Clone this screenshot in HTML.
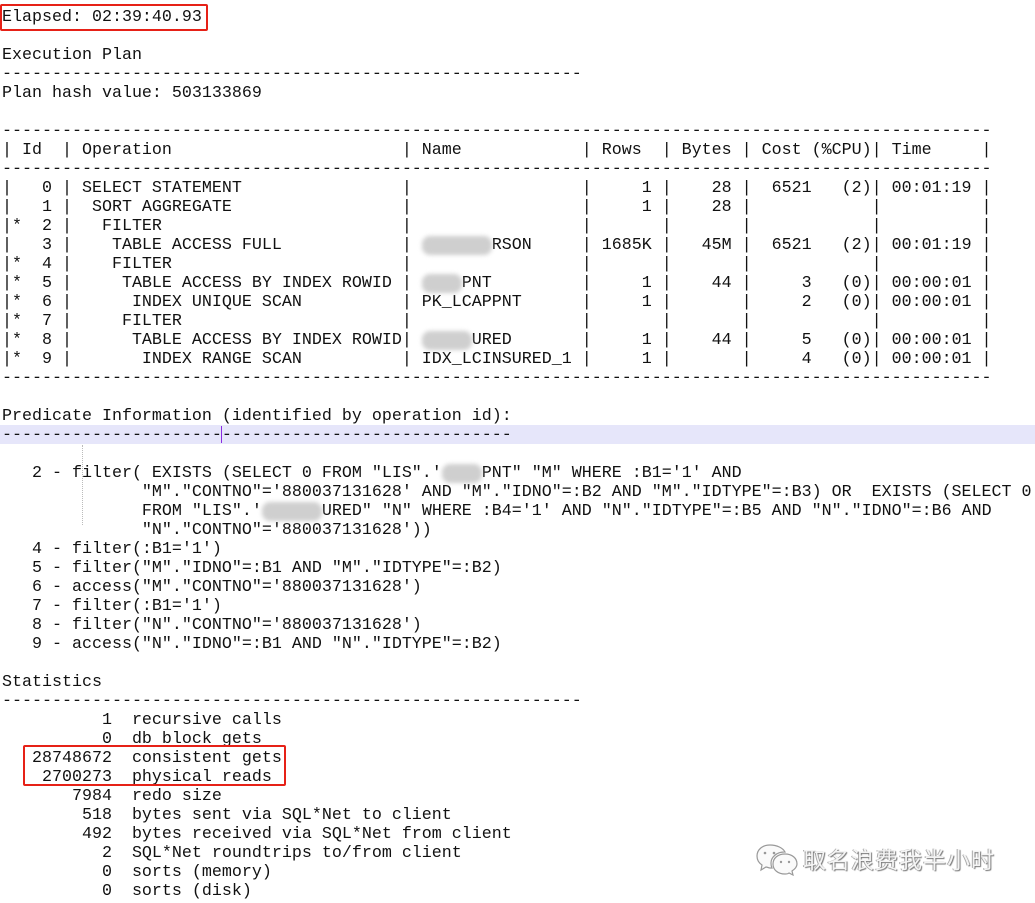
<!DOCTYPE html>
<html><head><meta charset="utf-8"><style>
html,body{margin:0;padding:0;background:#fff;width:1035px;height:903px;overflow:hidden;position:relative}
pre{position:absolute;left:2px;top:8px;margin:0;font-family:"Liberation Mono","Courier New",monospace;font-size:16.67px;line-height:19px;color:#111;white-space:pre}
.b{background:#cfcfcf;color:transparent;border-radius:8px;filter:blur(2px)}
.band{position:absolute;left:0;top:425px;width:1035px;height:19px;background:#e6e6fa}
.cur{position:absolute;left:221px;top:426px;width:1px;height:17px;background:#8a2be2}
.guide{position:absolute;left:82px;top:445px;height:80px;border-left:1px dotted #bbb}
.box{position:absolute;border:2.5px solid #e62117;border-radius:2px}
.wm{position:absolute;left:803px;top:841px;font-family:"Noto Sans CJK SC",sans-serif;font-size:23px;color:#f4f4f4;letter-spacing:1px;text-shadow:1px 1px 1px #777,-1px 0 0 #aaa}
</style></head><body>
<div class="band"></div><div class="cur"></div><div class="guide"></div>
<pre>Elapsed: 02:39:40.93

Execution Plan
----------------------------------------------------------
Plan hash value: 503133869

---------------------------------------------------------------------------------------------------
| Id  | Operation                       | Name            | Rows  | Bytes | Cost (%CPU)| Time     |
---------------------------------------------------------------------------------------------------
|   0 | SELECT STATEMENT                |                 |     1 |    28 |  6521   (2)| 00:01:19 |
|   1 |  SORT AGGREGATE                 |                 |     1 |    28 |            |          |
|*  2 |   FILTER                        |                 |       |       |            |          |
|   3 |    TABLE ACCESS FULL            | <span class="b">       </span>RSON     | 1685K |   45M |  6521   (2)| 00:01:19 |
|*  4 |    FILTER                       |                 |       |       |            |          |
|*  5 |     TABLE ACCESS BY INDEX ROWID | <span class="b">    </span>PNT         |     1 |    44 |     3   (0)| 00:00:01 |
|*  6 |      INDEX UNIQUE SCAN          | PK_LCAPPNT      |     1 |       |     2   (0)| 00:00:01 |
|*  7 |     FILTER                      |                 |       |       |            |          |
|*  8 |      TABLE ACCESS BY INDEX ROWID| <span class="b">     </span>URED       |     1 |    44 |     5   (0)| 00:00:01 |
|*  9 |       INDEX RANGE SCAN          | IDX_LCINSURED_1 |     1 |       |     4   (0)| 00:00:01 |
---------------------------------------------------------------------------------------------------

Predicate Information (identified by operation id):
---------------------------------------------------

   2 - filter( EXISTS (SELECT 0 FROM "LIS".'<span class="b">    </span>PNT" "M" WHERE :B1='1' AND
              "M"."CONTNO"='880037131628' AND "M"."IDNO"=:B2 AND "M"."IDTYPE"=:B3) OR  EXISTS (SELECT 0
              FROM "LIS".'<span class="b">      </span>URED" "N" WHERE :B4='1' AND "N"."IDTYPE"=:B5 AND "N"."IDNO"=:B6 AND
              "N"."CONTNO"='880037131628'))
   4 - filter(:B1='1')
   5 - filter("M"."IDNO"=:B1 AND "M"."IDTYPE"=:B2)
   6 - access("M"."CONTNO"='880037131628')
   7 - filter(:B1='1')
   8 - filter("N"."CONTNO"='880037131628')
   9 - access("N"."IDNO"=:B1 AND "N"."IDTYPE"=:B2)

Statistics
----------------------------------------------------------
          1  recursive calls
          0  db block gets
   28748672  consistent gets
    2700273  physical reads
       7984  redo size
        518  bytes sent via SQL*Net to client
        492  bytes received via SQL*Net from client
          2  SQL*Net roundtrips to/from client
          0  sorts (memory)
          0  sorts (disk)</pre>
<div class="box" style="left:0;top:4px;width:204px;height:23px"></div>
<div class="box" style="left:23px;top:745px;width:259px;height:37px"></div>
<svg style="position:absolute;left:755px;top:842px" width="44" height="34" viewBox="0 0 44 34">
<g fill="#fafafa" stroke="#999" stroke-width="1.2">
<path d="M15 3C7 3 2 8 2 14c0 4 2 7 5 9l-1 5 5-3c1 0 3 1 4 1 1 0 1 0 2 0-1-2-1-3-1-5 0-6 6-11 13-11h1C28 6 22 3 15 3z"/>
<path d="M30 12c-7 0-12 4-12 10s5 10 12 10c1 0 3 0 4-1l4 2-1-4c3-2 5-4 5-7 0-6-5-10-12-10z"/>
</g>
<g fill="#999"><circle cx="10" cy="11" r="1.3"/><circle cx="19" cy="11" r="1.3"/><circle cx="26" cy="20" r="1.2"/><circle cx="34" cy="20" r="1.2"/></g>
</svg>
<div class="wm">取名浪费我半小时</div>
</body></html>
